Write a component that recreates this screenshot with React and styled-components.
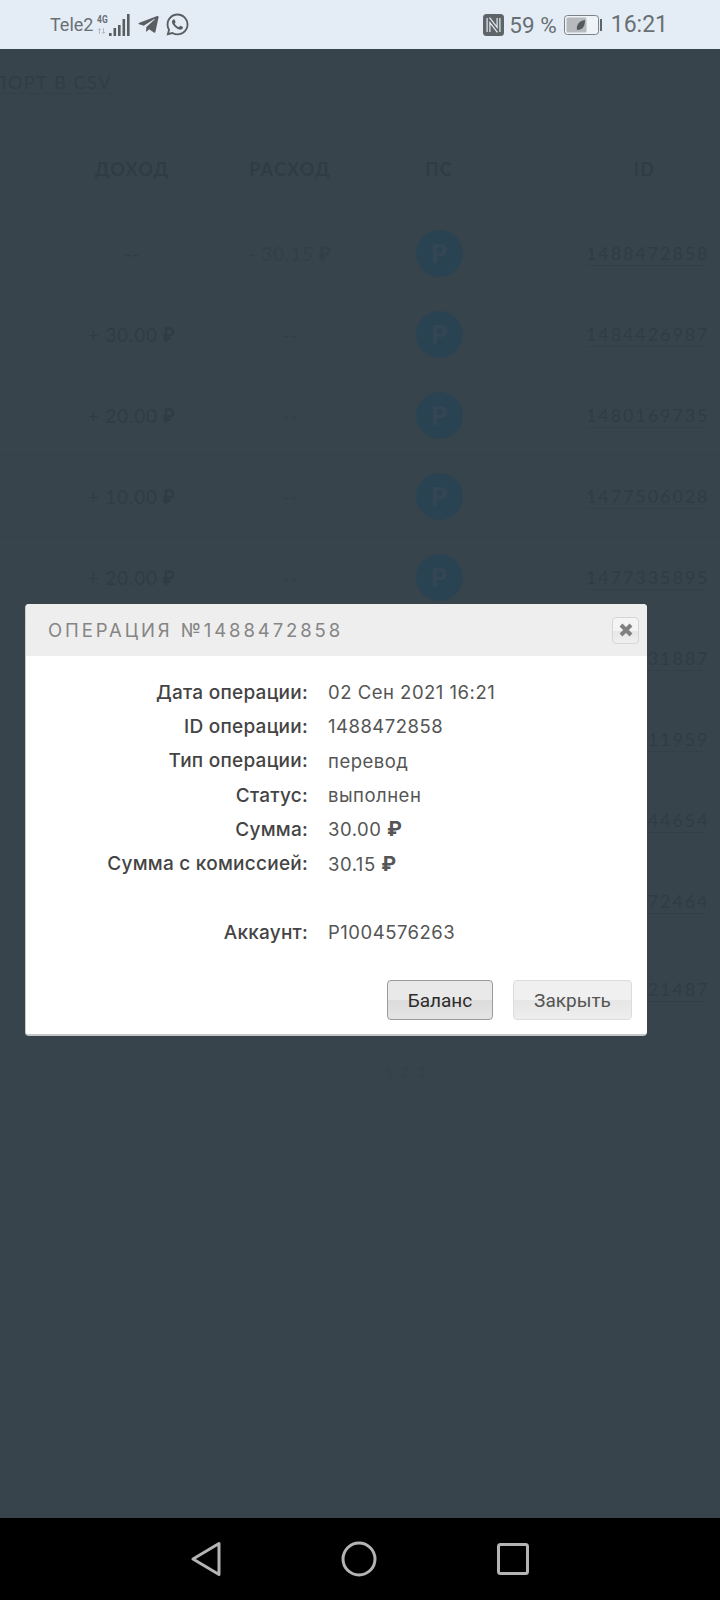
import React from 'react';
import styled, { createGlobalStyle } from 'styled-components';
import { FaTelegramPlane, FaWhatsapp } from 'react-icons/fa';

const GlobalStyle = createGlobalStyle`
  html, body {
    margin: 0;
    padding: 0;
    background: #38444c;
  }
`;

const Screen = styled.div`
  position: relative;
  width: 720px;
  height: 1600px;
  display: flex;
  flex-direction: column;
  overflow: hidden;
  font-family: Lato, "Open Sans", sans-serif;
`;

const StatusBar = styled.div`
  height: 49px;
  flex: none;
  background: #e4edf5;
  color: #6a6f74;
  display: flex;
  align-items: center;
  justify-content: space-between;
  padding: 0 52px 0 50px;
  font-family: Roboto, "Liberation Sans", sans-serif;
`;

const StatusGroup = styled.div`
  display: flex;
  align-items: center;
`;

const Carrier = styled.span`
  font-size: 18px;
  margin-right: 3px;
  width: 44px;
`;

const Network = styled.div`
  width: 12px;
  display: flex;
  flex-direction: column;
  align-items: flex-start;
  gap: 4px;
`;

const NetworkType = styled.span`
  font-size: 10px;
  font-weight: 700;
  line-height: 9px;
  transform: scaleX(0.85);
  transform-origin: left;
`;

const TelegramIcon = styled(FaTelegramPlane)`
  margin-left: 7px;
  color: #595e63;
`;

const WhatsappIcon = styled(FaWhatsapp)`
  margin-left: 5px;
  color: #595e63;
`;

const Battery = styled.span`
  font-size: 22.5px;
  margin: 0 7px 0 5px;
`;

const Clock = styled.span`
  font-size: 23px;
  margin-left: 9px;
`;

const Content = styled.div`
  flex: 1;
  background: #38444c;
  color: #303c44;
`;

const ExportLink = styled.a`
  display: inline-block;
  margin: 22px 0 30px -47px;
  font-size: 18px;
  line-height: 22px;
  letter-spacing: 1.5px;
  border-bottom: 1px dotted #303c44;
`;

const TableRow = styled.div`
  display: grid;
  grid-template-columns: 176px 140px 158px 1fr;
  align-items: center;
  justify-items: center;
  padding-left: 44px;
  height: ${(p) => p.$height}px;
  border-bottom: ${(p) => (p.$line ? '1px solid #364249' : 'none')};
  box-sizing: border-box;
`;

const HeadCell = styled.div`
  font-size: 18px;
  font-weight: 700;
  letter-spacing: 1.2px;
  ${(p) => p.$id && 'justify-self: end; width: 117px; margin-right: 17px; text-align: center;'}
`;

const Amount = styled.div`
  font-size: 19px;
  letter-spacing: 0.8px;
  white-space: nowrap;
  color: ${(p) => (p.$faint ? '#333f47' : '#303c44')};
`;

const Coin = styled.div`
  width: 47px;
  height: 47px;
  border-radius: 50%;
  background: #2a4353;
  color: #344656;
  display: flex;
  align-items: center;
  justify-content: center;
  font-size: 26px;
  font-weight: 900;
`;

const IdLink = styled.a`
  justify-self: end;
  width: 117px;
  margin-right: 17px;
  text-align: center;
  font-size: 18px;
  line-height: 24px;
  letter-spacing: 1.9px;
  border-bottom: 1px dotted #303c44;
  white-space: nowrap;
`;

const Pager = styled.div`
  margin: 26px 0 0 385px;
  font-size: 14px;
  letter-spacing: 2px;
  color: #354149;
`;

const NavBar = styled.div`
  height: 82px;
  flex: none;
  background: #000;
  display: flex;
  align-items: center;
  justify-content: center;
  gap: 120px;
`;

const Modal = styled.div`
  position: absolute;
  left: 25px;
  top: 604px;
  width: 622px;
  height: 432px;
  box-sizing: border-box;
  background: #fff;
  border-radius: 4px;
  border-left: 1px solid #c8cacc;
  border-bottom: 2px solid #c4c6c8;
  display: flex;
  flex-direction: column;
  overflow: hidden;
  font-family: Inter, "Liberation Sans", sans-serif;
`;

const ModalHeader = styled.div`
  height: 52px;
  flex: none;
  background: #eeeeee;
  display: flex;
  align-items: center;
  justify-content: space-between;
  padding: 0 8px 0 22px;
`;

const ModalTitle = styled.div`
  font-size: 18.5px;
  letter-spacing: 2.9px;
  color: #858585;
`;

const CloseButton = styled.button`
  width: 27px;
  height: 27px;
  padding: 0;
  display: flex;
  align-items: center;
  justify-content: center;
  border: 1px solid #d6d6d6;
  border-radius: 4px;
  background: linear-gradient(#f4f4f4 50%, #e6e6e6 50%, #f0f0f0);
`;

const Details = styled.div`
  display: grid;
  grid-template-columns: 282px 1fr;
  column-gap: 20px;
  grid-auto-rows: 34.3px;
  align-items: center;
  margin-top: 19px;
`;

const Label = styled.div`
  text-align: right;
  font-size: 19px;
  font-weight: 500;
  letter-spacing: 0.25px;
  color: #444;
  white-space: nowrap;
`;

const Value = styled.div`
  font-size: 18.5px;
  color: #555;
  letter-spacing: 0.5px;
  white-space: nowrap;
`;

const Ruble = styled.span`
  font-size: 20px;
  font-weight: 700;
`;

const Spacer = styled.div`
  grid-column: 1 / 3;
`;

const ModalFooter = styled.div`
  margin-top: auto;
  display: flex;
  justify-content: flex-end;
  gap: 20px;
  padding: 0 15px 14px 0;
`;

const DialogButton = styled.button`
  height: 40px;
  width: ${(p) => p.$width}px;
  box-sizing: border-box;
  border-radius: 4px;
  border: 1px solid ${(p) => (p.$active ? '#9a9a9a' : '#dcdcdc')};
  background: ${(p) => (p.$active
    ? 'linear-gradient(#e9e9e9 50%, #dcdcdc 50%, #e4e4e4)'
    : 'linear-gradient(#f0f0f0 50%, #e6e6e6 50%, #eeeeee)')};
  color: ${(p) => (p.$active ? '#2c2c2c' : '#555')};
  font-family: Roboto, "Liberation Sans", sans-serif;
  font-size: 19px;
  padding: 0;
`;

const rows = [
  { income: '--', expense: '- 30.15', id: '1488472858' },
  { income: '+ 30.00', expense: '--', id: '1484426987' },
  { income: '+ 20.00', expense: '--', id: '1480169735' },
  { income: '+ 10.00', expense: '--', id: '1477506028' },
  { income: '+ 20.00', expense: '--', id: '1477335895' },
  { income: '+ 10.00', expense: '--', id: '1476431887' },
  { income: '+ 10.00', expense: '--', id: '1475411959' },
  { income: '+ 10.00', expense: '--', id: '1474144654' },
  { income: '+ 10.00', expense: '--', id: '1473372464' },
  { income: '+ 10.00', expense: '--', id: '1472221487', tall: true },
];

const details = [
  ['Дата операции:', '02 Сен 2021 16:21'],
  ['ID операции:', '1488472858'],
  ['Тип операции:', 'перевод'],
  ['Статус:', 'выполнен'],
  ['Сумма:', '30.00', true],
  ['Сумма с комиссией:', '30.15', true],
];

const money = (text) => (text === '--' ? text : <>{text} <Ruble>₽</Ruble></>);

const ArrowsIcon = () => (
  <svg width="10" height="6" viewBox="0 0 10 6" fill="#b8bcc0">
    <path d="M2 6V2H0.5L2.5 0l2 2H3v4zM7 0v4h1.5l-2 2-2-2H6V0z" />
  </svg>
);

const SignalIcon = () => (
  <svg width="21" height="22" viewBox="0 0 21 22" fill="#595e63">
    <rect x="0" y="19" width="2.6" height="3" />
    <rect x="4.5" y="14" width="2.6" height="8" />
    <rect x="9" y="11" width="2.6" height="11" />
    <rect x="13.5" y="5" width="2.6" height="17" />
    <rect x="18" y="0" width="2.6" height="22" />
  </svg>
);

const NfcIcon = () => (
  <svg width="21" height="22" viewBox="0 0 21 22" fill="none">
    <rect width="21" height="22" rx="3.5" fill="#5f6468" />
    <path d="M5.5 4v14M15.5 4v14M5.5 4.5l10 13" stroke="#e4edf5" strokeWidth="4" />
    <path d="M5.5 4v14M15.5 4v14M5.5 4.5l10 13" stroke="#5f6468" strokeWidth="1.6" />
  </svg>
);

const BatteryIcon = () => (
  <svg width="38" height="20" viewBox="0 0 38 20">
    <rect x="0.5" y="0.5" width="34" height="19" rx="3" fill="#eef3f8" stroke="#7c8186" />
    <rect x="2.5" y="2.5" width="20" height="15" rx="1.5" fill="#b6b9bd" />
    <path d="M13 15c-1-5 2-9 8-10 0 6-2 10-8 10z" fill="#55595d" />
    <rect x="36" y="4" width="2" height="12" fill="#5f6468" />
  </svg>
);

const BackIcon = () => (
  <svg width="30" height="36" viewBox="0 0 30 36" fill="none" stroke="#b4b4b4" strokeWidth="3" strokeLinejoin="round">
    <path d="M2 18 28 2.5v31z" />
  </svg>
);

const HomeIcon = () => (
  <svg width="36" height="36" viewBox="0 0 36 36" fill="none" stroke="#b4b4b4" strokeWidth="3">
    <circle cx="18" cy="18" r="16" />
  </svg>
);

const RecentIcon = () => (
  <svg width="32" height="32" viewBox="0 0 32 32" fill="none" stroke="#b4b4b4" strokeWidth="3">
    <rect x="1.5" y="1.5" width="29" height="29" rx="2" />
  </svg>
);

const CloseIcon = () => (
  <svg width="14" height="14" viewBox="0 0 14 14" stroke="#808080" strokeWidth="4">
    <path d="M2 2l10 10M12 2 2 12" />
  </svg>
);

const App = () => (
  <>
    <GlobalStyle />
    <Screen>
      <StatusBar>
        <StatusGroup>
          <Carrier>Tele2</Carrier>
          <Network>
            <NetworkType>4G</NetworkType>
            <ArrowsIcon />
          </Network>
          <SignalIcon />
          <TelegramIcon size={23} />
          <WhatsappIcon size={25} />
        </StatusGroup>
        <StatusGroup>
          <NfcIcon />
          <Battery>59 %</Battery>
          <BatteryIcon />
          <Clock>16:21</Clock>
        </StatusGroup>
      </StatusBar>
      <Content>
        <ExportLink>ЭКСПОРТ В CSV</ExportLink>
        <TableRow $height={89}>
          <HeadCell>ДОХОД</HeadCell>
          <HeadCell>РАСХОД</HeadCell>
          <HeadCell>ПС</HeadCell>
          <HeadCell $id>ID</HeadCell>
        </TableRow>
        {rows.map((row) => (
          <TableRow key={row.id} $height={row.tall ? 95 : 81} $line>
            <Amount>{money(row.income)}</Amount>
            <Amount $faint>{money(row.expense)}</Amount>
            <Coin>P</Coin>
            <IdLink>{row.id}</IdLink>
          </TableRow>
        ))}
        <Pager>1 2 3</Pager>
      </Content>
      <NavBar>
        <BackIcon />
        <HomeIcon />
        <RecentIcon />
      </NavBar>
      <Modal>
        <ModalHeader>
          <ModalTitle>ОПЕРАЦИЯ №1488472858</ModalTitle>
          <CloseButton><CloseIcon /></CloseButton>
        </ModalHeader>
        <Details>
          {details.map(([label, value, isMoney]) => (
            <React.Fragment key={label}>
              <Label>{label}</Label>
              <Value>{isMoney ? money(value) : value}</Value>
            </React.Fragment>
          ))}
          <Spacer />
          <Label>Аккаунт:</Label>
          <Value>P1004576263</Value>
        </Details>
        <ModalFooter>
          <DialogButton $active $width={106}>Баланс</DialogButton>
          <DialogButton $width={119}>Закрыть</DialogButton>
        </ModalFooter>
      </Modal>
    </Screen>
  </>
);

export default App;
